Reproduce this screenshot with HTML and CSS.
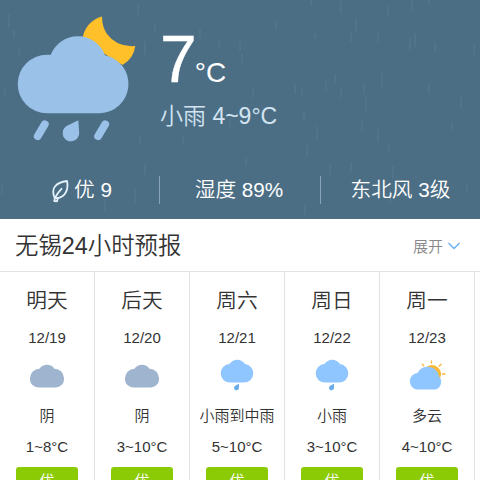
FILE: index.html
```
<!DOCTYPE html>
<html lang="zh-CN">
<head>
<meta charset="utf-8">
<title>无锡天气</title>
<link rel="stylesheet" href="styles.css">
</head>
<body>
<svg class="defs" width="0" height="0">
  <symbol id="cloud" viewBox="0 0 34 25"><path d="M8.500 24.500A8.300 8.300 0 0 1 0 16V15A9.300 9.300 0 0 1 9.500 5.800A9 9 0 0 1 24.500 5.800A9.300 9.300 0 0 1 34 15V16A8.300 8.300 0 0 1 25.500 24.500Z"/></symbol>
  <symbol id="rain" viewBox="0 0 34 32"><path fill="#90c6ff" d="M10.500 23.600A9.300 9.300 0 0 1 .7 14.500A9.300 9.300 0 0 1 9.500 5A9.300 9.300 0 0 1 25 5A9.300 9.300 0 0 1 33.300 14.500A9.300 9.300 0 0 1 23.500 23.600Z"/><path fill="#6bade9" d="M19 24.800V28.800A2.500 2.500 0 1 1 15.500 26.500Z"/></symbol>
</svg>
<header class="hero">
  <svg class="streaks" viewBox="0 0 480 219">
    <g stroke="#7fa3bb" stroke-width="2.200" stroke-linecap="round" opacity=".12">
      <path d="M341 2v11M311 1v4M388 7v8M412 2v8M429 1v3M356 20v11M351 33v8M315 34v4M378 33v8M410 38v11M415 34v12M435 43v7M474 45v9M382 74v12M335 75v8M326 82v8M341 89v8M364 85v8M366 96v15M429 84v9M461 97v10M302 89v6M317 127v11M362 120v10M378 130v11M389 144v6M452 123v6M307 146v10M304 113v7"/>
      <path d="M9 15v11M14 31v6M19 49v5M5 88v6M138 5v10M155 25v7M145 42v12M140 136v8M172 71v9M200 29v9M219 40v6M240 43v7M242 55v7M276 22v7M253 88v9M295 84v9M183 137v7M230 120v6M2 184v9M145 164v10M105 200v10M135 190v12M276 187v10M305 205v9M330 165v9M351 163v9M393 167v11M390 190v12M467 184v8M246 159v6"/>
    </g>
  </svg>
  <div class="now">
    <svg class="now-icon" viewBox="0 0 120 130">
      <path fill="#ffc029" d="M84 6.500A26 26 0 0 0 64.500 30L104.500 55A26 26 0 0 0 117.300 36Q99 37.500 89 24Q84 17 84 6.500Z"/>
      <path fill="#9ac1e8" d="M29 103.200A29.200 29.200 0 0 1 29 44.700H32.800A29 29 0 0 1 87 45.200A29.300 29.300 0 0 1 82 103.200Z"/>
      <g stroke="#9ac1e8" stroke-width="7.800" stroke-linecap="round"><path d="M26.800 114.300L19.700 126.200M87.200 114.300L80.100 126.200"/></g>
      <path fill="#9ac1e8" d="M60.300 110.300L61.200 122.500A8.300 8.300 0 1 1 48.500 116Z"/>
    </svg>
    <div class="reading">
      <div class="temp">7<span class="unit">°C</span></div>
      <div class="range">小雨 4~9°C</div>
    </div>
  </div>
  <div class="stats">
    <div class="stat air"><svg class="leaf" viewBox="0 0 18 24"><path fill="none" stroke="#e4f2fb" stroke-width="1.800" stroke-linecap="round" stroke-linejoin="round" d="M3.500 18.700C-.5 9 5 3.500 16 2C17.500 9 15.500 18.500 5.500 19.200M10.500 9.800C7.500 13 4 17 3.200 22L6 22.300L6.800 19.500"/></svg>优 9</div>
    <div class="stat humid">湿度 89%</div>
    <div class="stat wind">东北风 3级</div>
  </div>
</header>
<section class="bar">
  <h2>无锡24小时预报</h2>
  <div class="more">展开<svg class="chev" viewBox="0 0 14 8"><path fill="none" stroke="#68b0ef" stroke-width="1.400" d="M1.500 1L7 6.500L12.500 1"/></svg></div>
</section>
<main class="days">
  <article class="day"><h3>明天</h3><p class="date">12/19</p><div class="icon"><svg class="overcast"><use href="#cloud"/></svg></div><p class="sky">阴</p><p class="deg">1~8°C</p><span class="aqi">优</span></article>
  <article class="day"><h3>后天</h3><p class="date">12/20</p><div class="icon"><svg class="overcast"><use href="#cloud"/></svg></div><p class="sky">阴</p><p class="deg">3~10°C</p><span class="aqi">优</span></article>
  <article class="day"><h3>周六</h3><p class="date">12/21</p><div class="icon"><svg class="rain"><use href="#rain"/></svg></div><p class="sky">小雨到中雨</p><p class="deg">5~10°C</p><span class="aqi">优</span></article>
  <article class="day"><h3>周日</h3><p class="date">12/22</p><div class="icon"><svg class="rain"><use href="#rain"/></svg></div><p class="sky">小雨</p><p class="deg">3~10°C</p><span class="aqi">优</span></article>
  <article class="day"><h3>周一</h3><p class="date">12/23</p><div class="icon"><svg class="partly" viewBox="0 0 37 30"><circle cx="23" cy="14" r="9" fill="#fbb834"/><path stroke="#f9b23a" stroke-width="1.300" stroke-linecap="round" d="M22.500 .8v2.200M13.300 4.200l1.500 1.600M32 4.200l-1.600 1.800M33.500 14h2.300"/><path fill="#90c6ff" d="M8 29.500A8.300 8.300 0 0 1 8.500 13A11.500 11.500 0 0 1 30 16.500A7.800 7.800 0 0 1 26 29.500Z"/></svg></div><p class="sky">多云</p><p class="deg">4~10°C</p><span class="aqi">优</span></article>
</main>
</body>
</html>
```
FILE: styles.css
```
* { box-sizing: border-box; }
html, body { height: 480px; overflow: hidden; }
body { margin: 0; background: #fff; color: #333; font-family: "Liberation Sans", "Noto Sans CJK SC", sans-serif; font-weight: 350; }
h2, h3, p { margin: 0; font-weight: 350; }
svg { display: block; flex: none; overflow: visible; }
.defs { position: absolute; }
.hero { position: relative; height: 219px; background: #4c6e85; color: #fff; overflow: hidden; }
.streaks { position: absolute; inset: 0; width: 480px; height: 219px; }
.now { position: relative; display: flex; height: 160px; padding: 10px 0 0 18px; }
.now-icon { width: 120px; height: 130px; }
.reading { padding: 16px 0 0 22px; }
.temp { font-size: 66px; line-height: 66px; height: 76px; white-space: nowrap; -webkit-text-stroke: .4px #fff; }
.unit { font-size: 28px; line-height: 28px; margin-left: -2px; -webkit-text-stroke: 0; }
.range { font-size: 23px; line-height: 28px; color: #d2e4f1; white-space: nowrap; }
.stats { position: relative; display: grid; grid-template-columns: 160px 161px 159px; height: 59px; padding-top: 16px; }
.stat { display: flex; height: 28px; padding-bottom: 4px; align-items: center; justify-content: center; font-size: 20.700px; white-space: nowrap; border-right: 1px solid #89a4b7; }
.stat:last-child { border: 0; }
.air { padding-left: 4px; }
.humid { padding-right: 2px; }
.leaf { width: 18px; height: 24px; margin: 5px 5px 0 0; }
.bar { display: flex; align-items: center; justify-content: space-between; height: 53px; padding: 1px 19px 0 15px; border-bottom: 1px solid #e2e2e2; }
.bar h2 { font-size: 23.400px; line-height: 32px; }
.more { display: flex; align-items: center; font-size: 15px; color: #888; }
.chev { width: 14px; height: 8px; margin-left: 4px; }
.days { display: grid; grid-template-columns: repeat(5, 95px); height: 208px; width: 475px; }
.day { display: flex; flex-direction: column; align-items: center; border-right: 1px solid #e2e2e2; text-align: center; white-space: nowrap; }
.day h3 { font-size: 20.700px; line-height: 28px; margin-top: 15px; }
.date { font-size: 15px; line-height: 20px; margin-top: 13px; }
.icon { height: 36px; margin-top: 10px; display: flex; justify-content: center; }
.overcast { width: 34px; height: 25px; margin-top: 5px; fill: #9fb5cf; }
.rain { width: 34px; height: 32px; margin-top: 1px; }
.partly { width: 37px; height: 30px; margin-top: 2px; }
.sky { font-size: 15px; line-height: 20px; margin-top: 12px; }
.deg { font-size: 15px; line-height: 20px; margin-top: 11px; }
.aqi { width: 62px; height: 30px; margin-top: 10px; flex: none; border-radius: 3px; background: #8bcb05; color: #fff; font-size: 15px; line-height: 28px; }
```
